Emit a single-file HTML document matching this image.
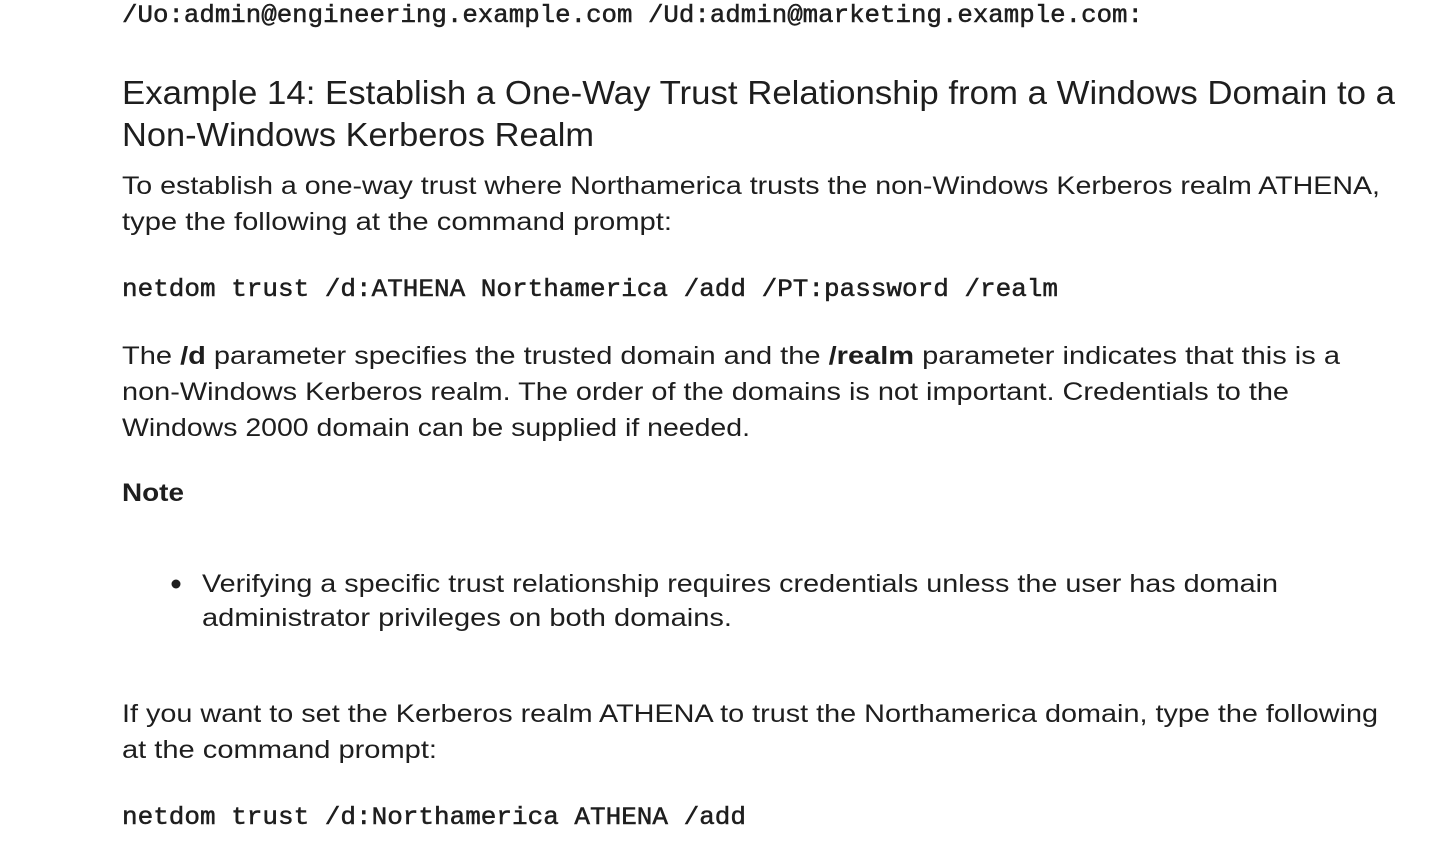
<!DOCTYPE html>
<html><head><meta charset="utf-8"><style>
html,body{margin:0;padding:0;background:#fff;width:1432px;height:848px;overflow:hidden}
svg{display:block}
text{fill:#1e1e1e;font-family:"Liberation Sans",sans-serif;font-size:25px}
.m{font-family:"Liberation Mono",monospace;font-size:25px;stroke:#1e1e1e;stroke-width:0.5px}
.h{font-size:33px}
</style></head><body>
<svg width="1432" height="848" xmlns="http://www.w3.org/2000/svg">
<text class="m" x="122" y="22" textLength="1021" lengthAdjust="spacingAndGlyphs">/Uo:admin@engineering.example.com /Ud:admin@marketing.example.com:</text>
<text class="h" x="122" y="104" textLength="1273" lengthAdjust="spacingAndGlyphs">Example 14: Establish a One-Way Trust Relationship from a Windows Domain to a</text>
<text class="h" x="122" y="146" textLength="472" lengthAdjust="spacingAndGlyphs">Non-Windows Kerberos Realm</text>
<text x="122" y="194" textLength="1258" lengthAdjust="spacingAndGlyphs">To establish a one-way trust where Northamerica trusts the non-Windows Kerberos realm ATHENA,</text>
<text x="122" y="230" textLength="550" lengthAdjust="spacingAndGlyphs">type the following at the command prompt:</text>
<text class="m" x="122" y="296" textLength="936" lengthAdjust="spacingAndGlyphs">netdom trust /d:ATHENA Northamerica /add /PT:password /realm</text>
<text x="122" y="364" textLength="1218" lengthAdjust="spacingAndGlyphs">The <tspan font-weight="bold">/d</tspan> parameter specifies the trusted domain and the <tspan font-weight="bold">/realm</tspan> parameter indicates that this is a</text>
<text x="122" y="400" textLength="1167" lengthAdjust="spacingAndGlyphs">non-Windows Kerberos realm. The order of the domains is not important. Credentials to the</text>
<text x="122" y="436" textLength="628" lengthAdjust="spacingAndGlyphs">Windows 2000 domain can be supplied if needed.</text>
<text x="122" y="501" font-weight="bold" textLength="62" lengthAdjust="spacingAndGlyphs">Note</text>
<circle cx="176" cy="584" r="4.5" fill="#1e1e1e"/>
<text x="202" y="592" textLength="1076" lengthAdjust="spacingAndGlyphs">Verifying a specific trust relationship requires credentials unless the user has domain</text>
<text x="202" y="626" textLength="530" lengthAdjust="spacingAndGlyphs">administrator privileges on both domains.</text>
<text x="122" y="722" textLength="1256" lengthAdjust="spacingAndGlyphs">If you want to set the Kerberos realm ATHENA to trust the Northamerica domain, type the following</text>
<text x="122" y="758" textLength="315" lengthAdjust="spacingAndGlyphs">at the command prompt:</text>
<text class="m" x="122" y="824" textLength="624" lengthAdjust="spacingAndGlyphs">netdom trust /d:Northamerica ATHENA /add</text>
</svg>
</body></html>
